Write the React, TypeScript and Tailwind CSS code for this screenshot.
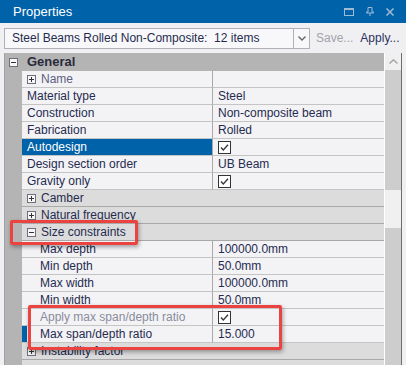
const font = { fontFamily: '"Liberation Sans", Arial, sans-serif' };

type Row =
  | { kind: "prop"; label: string; value?: string; check?: boolean; indent?: boolean; selected?: boolean; marker?: boolean; muted?: boolean; expander?: boolean }
  | { kind: "cat"; label: string; open?: boolean };

const rows: Row[] = [
  { kind: "prop", label: "Name", expander: true, muted: true },
  { kind: "prop", label: "Material type", value: "Steel" },
  { kind: "prop", label: "Construction", value: "Non-composite beam" },
  { kind: "prop", label: "Fabrication", value: "Rolled" },
  { kind: "prop", label: "Autodesign", check: true, selected: true },
  { kind: "prop", label: "Design section order", value: "UB Beam" },
  { kind: "prop", label: "Gravity only", check: true },
  { kind: "cat", label: "Camber" },
  { kind: "cat", label: "Natural frequency" },
  { kind: "cat", label: "Size constraints", open: true },
  { kind: "prop", label: "Max depth", value: "100000.0mm", indent: true },
  { kind: "prop", label: "Min depth", value: "50.0mm", indent: true },
  { kind: "prop", label: "Max width", value: "100000.0mm", indent: true },
  { kind: "prop", label: "Min width", value: "50.0mm", indent: true },
  { kind: "prop", label: "Apply max span/depth ratio", check: true, indent: true, muted: true },
  { kind: "prop", label: "Max span/depth ratio", value: "15.000", indent: true, marker: true },
  { kind: "cat", label: "Instability factor" },
];

function Box({ open }: { open?: boolean }) {
  return (
    <svg width="9" height="9" viewBox="0 0 9 9" className="shrink-0">
      <rect x="0.5" y="0.5" width="8" height="8" fill="#f7f7f9" stroke="#6f6f7a" />
      <line x1="2" y1="4.5" x2="7" y2="4.5" stroke="#333" />
      {!open && <line x1="4.5" y1="2" x2="4.5" y2="7" stroke="#333" />}
    </svg>
  );
}

function Check() {
  return (
    <svg width="13" height="13" viewBox="0 0 13 13">
      <rect x="0.5" y="0.5" width="12" height="12" fill="#ffffff" stroke="#333333" />
      <path d="M3 6.5 L5.3 9 L10 3.8" fill="none" stroke="#333333" strokeWidth="1.3" />
    </svg>
  );
}

function GridRow({ row }: { row: Row }) {
  if (row.kind === "cat") {
    return (
      <div className="flex h-[17px] shrink-0">
        <div className="w-[17px] shrink-0 bg-[#b4b4b4]" />
        <div className="flex flex-1 items-center gap-[5px] border-b border-[#a9a9a9] bg-[#dcdcdc] pl-[5px] text-[#262b4f]">
          <Box open={row.open} />
          <span>{row.label}</span>
        </div>
      </div>
    );
  }
  return (
    <div className="flex h-[17px] shrink-0">
      <div className="w-[17px] shrink-0 bg-[#b4b4b4]" />
      <div
        className={`relative flex w-[191px] shrink-0 items-center gap-[5px] border-b border-r border-b-[#c4c4c4] border-r-[#a9a9a9] ${
          row.indent ? "pl-[18px]" : "pl-[5px]"
        } ${row.selected ? "bg-[#0062a8] text-white" : row.muted ? "text-[#8a8c9c]" : "text-[#262b4f]"}`}
      >
        {row.marker && <div className="absolute left-0 top-0 h-full w-[5px] bg-[#0062a8]" />}
        {row.expander && <Box />}
        <span className={row.label === "Name" ? "text-[#5b6180]" : ""}>{row.label}</span>
      </div>
      <div className="flex flex-1 items-center border-b border-[#c4c4c4] pl-[5px] text-[#262b4f]">
        {row.check ? <Check /> : row.value}
      </div>
    </div>
  );
}

export default function App() {
  return (
    <div className="h-[365px] w-[406px] overflow-hidden bg-[#f0f0f3] text-[12px]" style={font}>
      <div className="flex h-[23px] items-center justify-between bg-[#0062a8] pl-[13px] pr-[12px]">
        <span className="text-[13px] text-white">Properties</span>
        <div className="flex items-center gap-[12px]">
          <svg width="10" height="8" viewBox="0 0 10 8">
            <rect x="0.5" y="0.5" width="9" height="7" fill="none" stroke="#9fbbd6" />
            <line x1="0" y1="1.5" x2="10" y2="1.5" stroke="#9fbbd6" />
          </svg>
          <svg width="8" height="9" viewBox="0 0 8 9">
            <path d="M2 0.5 H6 V5 H7.5 V6 H0.5 V5 H2 Z M4 6 V9" fill="none" stroke="#9fbbd6" />
          </svg>
          <svg width="8" height="8" viewBox="0 0 8 8">
            <path d="M0.5 0.5 L7.5 7.5 M7.5 0.5 L0.5 7.5" stroke="#9fbbd6" strokeWidth="1.5" />
          </svg>
        </div>
      </div>

      <div className="flex h-[30px] items-center pl-[4px]">
        <div className="flex h-[21px] w-[306px] border border-[#b0b0b8] bg-[#f8f8fa]">
          <div className="flex flex-1 items-center pl-[7px] text-[#262b4f]">Steel Beams Rolled Non-Composite:&nbsp;&nbsp;12 items</div>
          <div className="flex w-[16px] items-center justify-center border-l border-[#b0b0b8]">
            <svg width="8" height="5" viewBox="0 0 8 5">
              <path d="M0.5 0.5 L4 4 L7.5 0.5" fill="none" stroke="#666" strokeWidth="1.4" />
            </svg>
          </div>
        </div>
        <span className="ml-[6px] text-[#a3a3ab]">Save...</span>
        <span className="ml-[7px] text-[#2c3160]">Apply...</span>
      </div>

      <div className="relative ml-[4px] flex h-[312px] w-[398px] border-l border-r border-l-[#a0a0a8] border-r-[#6d6d6d] bg-[#f3f3f6]">
        <div className="flex flex-1 flex-col overflow-hidden">
          <div className="flex h-[18px] shrink-0 items-center bg-[#b4b4b4]">
            <div className="ml-[4px] mr-[9px]">
              <Box open />
            </div>
            <span className="text-[13px] font-bold text-[#2a2a3a]">General</span>
          </div>
          {rows.map((r, i) => (
            <GridRow key={i} row={r} />
          ))}
          <div className="flex flex-1">
            <div className="w-[17px] shrink-0 bg-[#b4b4b4]" />
            <div className="flex-1 bg-[#dcdcdc]" />
          </div>
        </div>
        <div className="flex w-[17px] shrink-0 flex-col border-l border-white">
          <div className="flex h-[17px] shrink-0 items-center justify-center bg-[#f0f0f0]">
            <svg width="9" height="5" viewBox="0 0 9 5">
              <path d="M0.5 4.5 L4.5 0.8 L8.5 4.5" fill="none" stroke="#a6a6a6" strokeWidth="1.5" />
            </svg>
          </div>
          <div className="h-[120px] shrink-0 bg-[#cdcdcd]" />
          <div className="h-[38px] shrink-0 bg-[#f0f0f0]" />
          <div className="flex-1 bg-[#cdcdcd]" />
        </div>

        <div className="absolute left-[5px] top-[167px] h-[25px] w-[128px] rounded-[2px] border-[3px] border-[#ea4340] shadow-[1px_2px_4px_rgba(0,0,0,0.35)]" />
        <div className="absolute left-[23px] top-[252px] h-[45px] w-[254px] rounded-[2px] border-[3px] border-[#ea4340] shadow-[1px_2px_4px_rgba(0,0,0,0.35)]" />
      </div>
    </div>
  );
}
